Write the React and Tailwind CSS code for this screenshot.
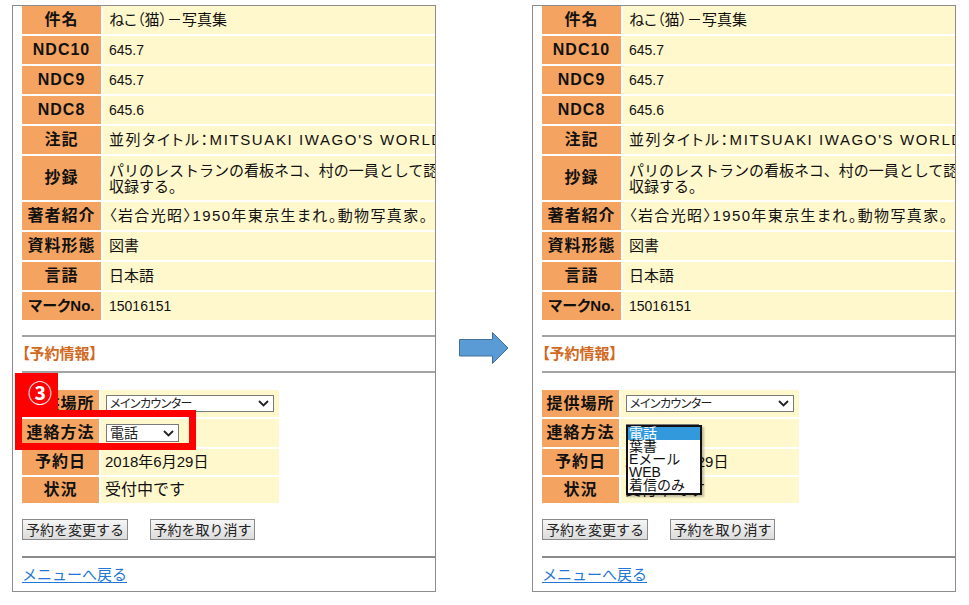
import React from "react";

const details = [
  { label: "件名", value: "ねこ（猫）－写真集", palt: true },
  { label: "NDC10", value: "645.7", num: true },
  { label: "NDC9", value: "645.7", num: true },
  { label: "NDC8", value: "645.6", num: true },
  { label: "注記", value: "並列タイトル：MITSUAKI IWAGO'S WORLD", palt: true, track: "tracking-[1.6px]" },
  { label: "抄録", value: "パリのレストランの看板ネコ、村の一員として認められた猫たちを", value2: "収録する。", tall: true },
  { label: "著者紹介", value: "〈岩合光昭〉1950年東京生まれ。動物写真家。", palt: true, track: "tracking-[1.4px]" },
  { label: "資料形態", value: "図書" },
  { label: "言語", value: "日本語" },
  { label: "マークNo.", value: "15016151", num: true, small: true },
];

function Chevron() {
  return (
    <svg width="11" height="7" viewBox="0 0 11 7" className="shrink-0">
      <path d="M1 1l4.5 4.5L10 1" fill="none" stroke="#222" strokeWidth="1.8" />
    </svg>
  );
}

function FakeSelect({ value, className }) {
  return (
    <div className={`ml-[5px] flex items-center justify-between border border-[#7a7a7a] bg-white pl-[3px] pr-[4px] leading-none text-[#222] [font-feature-settings:'palt'] ${className}`}>
      <span className="whitespace-nowrap">{value}</span>
      <Chevron />
    </div>
  );
}

function Label({ children, h, small }) {
  return (
    <div className={`flex items-center justify-center bg-[#f4a460] font-bold text-[#111] ${small ? "text-[15px] tracking-normal [font-feature-settings:'palt']" : "text-[16px] tracking-[1px]"} ${h}`}>
      {children}
    </div>
  );
}

function Panel({ open }) {
  return (
    <div className="relative h-[587px] w-[424px] shrink-0 overflow-hidden border border-[#8c8c8c] bg-white pl-[9px]">
      {/* 書誌情報 */}
      <div className="grid grid-cols-[79px_1fr] gap-[2px]">
        {details.map((r) => (
          <React.Fragment key={r.label}>
            <Label h={r.tall ? "h-[44px]" : "h-[28px]"} small={r.small}>{r.label}</Label>
            <div className="flex min-w-0 flex-col justify-center overflow-hidden bg-[#fff8cc] pl-[6px] text-[#111]">
              <div className={`whitespace-nowrap leading-[16px] ${r.num ? "text-[14px]" : "text-[15px]"} ${r.palt ? "[font-feature-settings:'palt']" : ""} ${r.track || ""}`}>{r.value}</div>
              {r.value2 && <div className="whitespace-nowrap text-[15px] leading-[15px]">{r.value2}</div>}
            </div>
          </React.Fragment>
        ))}
      </div>

      <div className="mt-[15px] h-[2px] bg-[#a3a3a3]" />
      <div className="flex h-[34px] items-center text-[15px] font-bold text-[#d2691e] [font-feature-settings:'palt']">【予約情報】</div>
      <div className="h-[2px] bg-[#a3a3a3]" />

      {/* 予約情報 */}
      <div className="mt-[17px] grid w-[257px] grid-cols-[77px_178px] gap-[2px]">
        <Label h="h-[27px]">提供場所</Label>
        <div className="flex items-center bg-[#fff8cc]">
          <FakeSelect value="メインカウンター" className="h-[17px] w-[168px] text-[12px] tracking-[-0.6px]" />
        </div>
        <Label h="h-[28px]">連絡方法</Label>
        <div className="flex items-center bg-[#fff8cc]">
          <FakeSelect value="電話" className="h-[18px] w-[73px] text-[14px]" />
        </div>
        <Label h="h-[26px]">予約日</Label>
        <div className="flex items-center bg-[#fff8cc] pl-[4px] text-[15px] text-[#111]">2018年6月29日</div>
        <Label h="h-[26px]">状況</Label>
        <div className="flex items-center bg-[#fff8cc] pl-[4px] text-[16px] text-[#111]">受付中です</div>
      </div>

      <div className="mt-[16px] flex gap-[22px]">
        <button className="h-[21px] w-[106px] border border-[#8a8a8a] bg-gradient-to-b from-[#f6f6f6] to-[#dcdcdc] text-[14px] leading-none text-[#222]">予約を変更する</button>
        <button className="h-[21px] w-[105px] border border-[#8a8a8a] bg-gradient-to-b from-[#f6f6f6] to-[#dcdcdc] text-[14px] leading-none text-[#222]">予約を取り消す</button>
      </div>

      <div className="mt-[16px] h-[2px] bg-[#8c8c8c]" />
      <div className="mt-[8px] leading-[18px]">
        <a href="#" className="text-[15px] text-[#2477d6] underline underline-offset-2">メニューへ戻る</a>
      </div>

      {open ? (
        <div className="absolute left-[93px] top-[419px] w-[76px] border-2 border-[#111] bg-white text-[14px] leading-[13px] text-[#111] shadow-[2px_2px_2px_rgba(0,0,0,0.25)]">
          <div className="bg-[#3399dd] pl-[1px] text-white">電話</div>
          <div className="pl-[1px]">葉書</div>
          <div className="pl-[1px]">Eメール</div>
          <div className="pl-[1px]">WEB</div>
          <div className="pb-[1px] pl-[1px]">着信のみ</div>
        </div>
      ) : (
        <>
          <div className="absolute left-[2px] top-[367px] flex h-[38px] w-[43px] items-center justify-center bg-[#ff0000] pl-[7px] font-['Noto_Sans_CJK_JP',sans-serif] text-[24px] font-bold leading-none text-white">③</div>
          <div className="absolute left-[2px] top-[404px] h-[40px] w-[181px] border-[7px] border-[#ff0000]" />
        </>
      )}
    </div>
  );
}

export default function App() {
  return (
    <div className="h-[605px] w-[969px] overflow-hidden bg-white font-['Liberation_Sans','Noto_Sans_CJK_JP',sans-serif]">
      <div className="flex items-start pl-[12px] pt-[5px]">
        <Panel />
        <div className="flex w-[96px] shrink-0 justify-center pt-[327px]">
          <svg width="50" height="32" viewBox="0 0 50 32">
            <polygon points="0.5,7.5 33.5,7.5 33.5,0.5 49,16 33.5,31.5 33.5,24 0.5,24" fill="#5b9bd5" stroke="#41719c" strokeWidth="1" />
          </svg>
        </div>
        <Panel open />
      </div>
    </div>
  );
}
